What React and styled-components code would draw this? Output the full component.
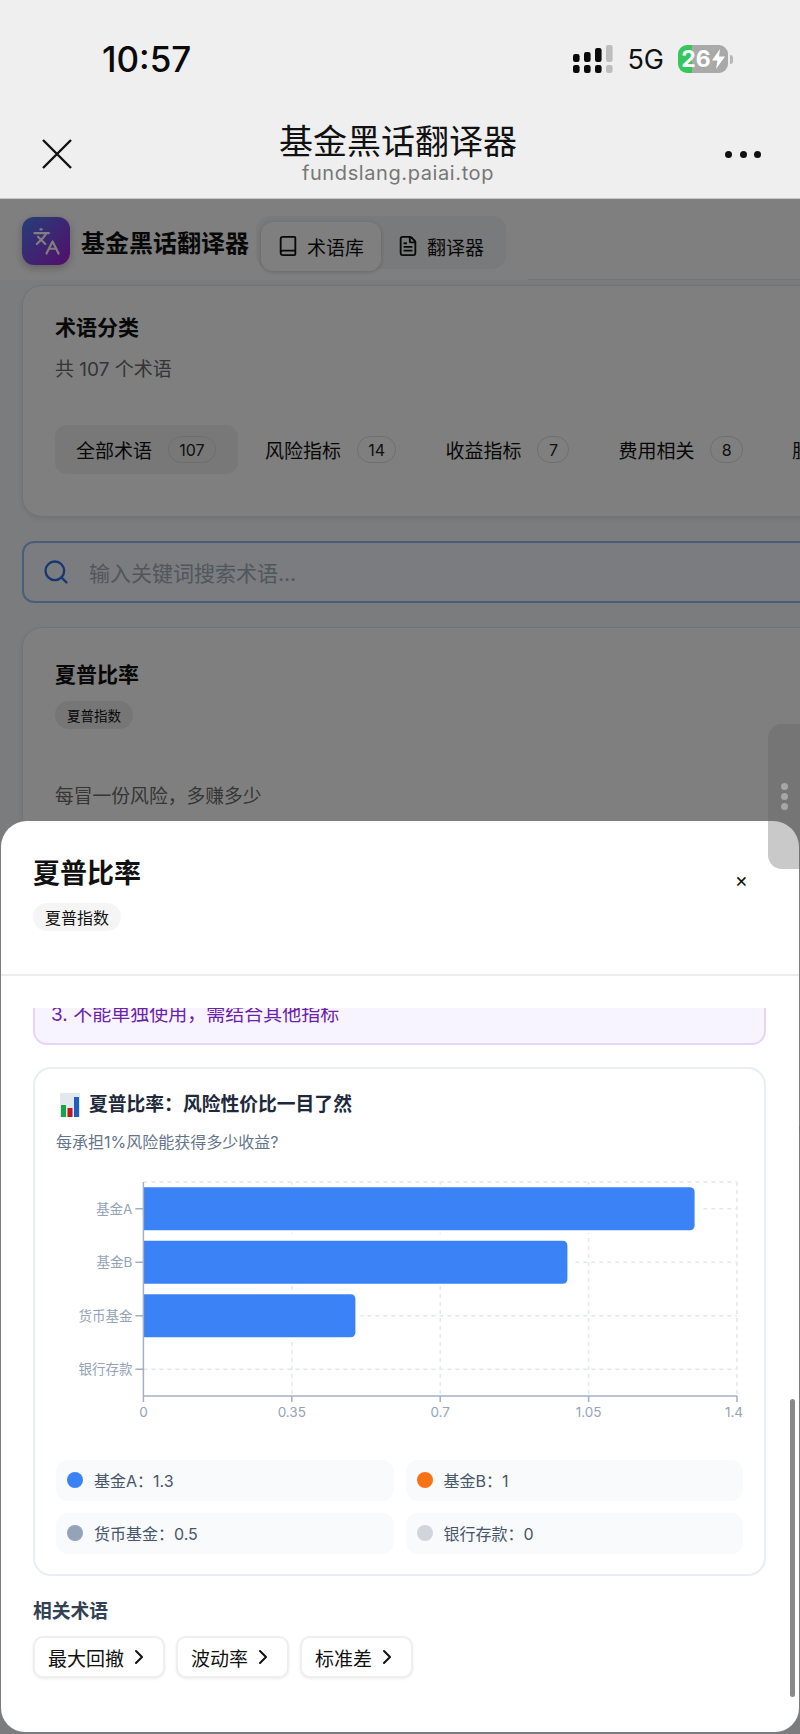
import React from 'react';
import styled, { createGlobalStyle } from 'styled-components';
import { Book, FileText, Languages, Search, ChevronRight } from 'lucide-react';

const GlobalStyle = createGlobalStyle`
  html, body {
    margin: 0;
    padding: 0;
    background: #efefef;
  }
  * {
    box-sizing: border-box;
  }
  body {
    font-family: Inter, "Noto Sans CJK SC", sans-serif;
    color: #111111;
  }
`;

const Screen = styled.div`
  position: relative;
  width: 800px;
  height: 1734px;
  overflow: hidden;
`;

/* webview chrome */
const Chrome = styled.div`
  height: 199px;
  background: #efefef;
  border-bottom: 1px solid #c9c9c9;
`;

const StatusBar = styled.div`
  height: 118px;
  display: flex;
  align-items: center;
  justify-content: space-between;
  padding: 0 67px 0 102px;
`;

const Clock = styled.div`
  font-size: 35px;
  font-weight: 500;
  color: #0a0a0a;
`;

const StatusIcons = styled.div`
  display: flex;
  align-items: center;
`;

const NetLabel = styled.span`
  font-size: 27px;
  font-weight: 400;
  margin: 0 14px;
  color: #111111;
`;

const Battery = styled.div`
  width: 50px;
  height: 28px;
  border-radius: 9px;
  background: linear-gradient(90deg, #34c759 14px, #a9a9a9 14px);
  display: flex;
  align-items: center;
  justify-content: center;
  gap: 1px;
  color: #ffffff;
  font-size: 23px;
  font-weight: 700;
`;

const BatteryNub = styled.span`
  width: 3px;
  height: 9px;
  margin-left: 2px;
  border-radius: 0 3px 3px 0;
  background: #b5b5b5;
`;

const NavRow = styled.div`
  height: 72px;
  display: grid;
  grid-template-columns: 236px 240px 1fr;
  align-items: center;
  padding: 0 39px 0 42px;
`;

const NavTitleBlock = styled.div`
  text-align: center;
`;

const NavTitle = styled.div`
  font-size: 34px;
  line-height: 38px;
  white-space: nowrap;
  color: #111111;
`;

const NavHost = styled.div`
  font-size: 20px;
  line-height: 24px;
  letter-spacing: 0.6px;
  color: #777777;
  white-space: nowrap;
`;

const MoreDots = styled.div`
  justify-self: end;
  display: flex;
  gap: 7.5px;
`;

const MoreDot = styled.span`
  width: 7px;
  height: 7px;
  border-radius: 50%;
  background: #111111;
`;

/* page behind the sheet */
const PageArea = styled.div`
  position: relative;
  height: 1535px;
  background: #f6f8fb;
`;

const Dim = styled.div`
  position: absolute;
  inset: 0;
  background: rgba(0, 0, 0, 0.5);
`;

const PageHeader = styled.div`
  height: 81px;
  display: flex;
  align-items: center;
  padding: 3px 0 0 22px;
  background: linear-gradient(#e6e6e6, #e6e6e6) right bottom / 272px 1px no-repeat, #ffffff;
`;

const LogoBox = styled.div`
  width: 48px;
  height: 48px;
  border-radius: 12px;
  background: linear-gradient(135deg, #4a7ff0, #a81bd8);
  display: flex;
  align-items: center;
  justify-content: center;
  color: #ffffff;
  box-shadow: 0 3px 8px rgba(0, 0, 0, 0.25);
`;

const AppTitle = styled.div`
  font-size: 24px;
  font-weight: 600;
  margin-left: 11px;
  white-space: nowrap;
`;

const Tabs = styled.div`
  display: flex;
  align-items: flex-start;
  width: 250px;
  height: 53px;
  margin: 2px 0 0 7px;
  padding: 6px 0 0 5px;
  border-radius: 14px;
  background: #f3f4f6;
`;

const Tab = styled.div`
  height: 49px;
  width: 120px;
  flex: none;
  display: flex;
  align-items: center;
  gap: 8px;
  padding-left: 16px;
  font-size: 19px;
  border-radius: 12px;
  white-space: nowrap;
  background: ${(p) => (p.$active ? '#ffffff' : 'transparent')};
  box-shadow: ${(p) => (p.$active ? '0 1px 4px rgba(0,0,0,0.2)' : 'none')};
`;

const Content = styled.div`
  width: 1100px;
  padding: 5px 0 0 22px;
`;

const Card = styled.div`
  background: #ffffff;
  border: 1px solid #e6e6e6;
  border-radius: 20px;
  box-shadow: 0 2px 5px rgba(0, 0, 0, 0.08);
  padding: ${(p) => p.$pad || '27px 32px 42px'};
`;

const CardTitle = styled.div`
  font-size: 21px;
  line-height: 30px;
  font-weight: 600;
`;

const CardNote = styled.div`
  font-size: 19px;
  line-height: 26px;
  margin-top: 14px;
  color: #6b6b6b;
`;

const ChipRow = styled.div`
  display: flex;
  gap: 6px;
  margin-top: 42px;
`;

const Chip = styled.div`
  height: 49px;
  display: flex;
  align-items: center;
  gap: 16px;
  padding: 0 22px 0 21px;
  border-radius: 12px;
  font-size: 19px;
  white-space: nowrap;
  background: ${(p) => (p.$active ? '#f1f1f1' : 'transparent')};
`;

const ChipCount = styled.span`
  height: 27px;
  min-width: 32px;
  padding: 0 10.3px;
  display: flex;
  align-items: center;
  justify-content: center;
  border: 1px solid #dddddd;
  border-radius: 14px;
  font-size: 16px;
  color: #222222;
`;

const SearchBar = styled.div`
  height: 62px;
  margin-top: 24px;
  display: flex;
  align-items: center;
  gap: 19px;
  padding-left: 18px;
  border: 2px solid #93bdf5;
  border-radius: 12px;
  background: #f5f8fe;
  color: #2f6fe0;
`;

const Placeholder = styled.span`
  font-size: 21px;
  color: #a3acba;
`;

const TermTag = styled.div`
  display: inline-flex;
  align-items: center;
  height: 28px;
  margin-top: 11px;
  padding: 0 12px;
  border-radius: 14px;
  font-size: 13.5px;
  background: #ececec;
`;

const TermPlain = styled.div`
  font-size: 18.8px;
  line-height: 26px;
  margin-top: 55px;
  color: #6b6b6b;
`;

const TermCard = styled(Card)`
  margin-top: 24px;
  height: 500px;
`;

/* side handle of the webview */
const SideHandle = styled.div`
  position: absolute;
  z-index: 3;
  left: 768px;
  top: 724px;
  width: 32px;
  height: 145px;
  border-radius: 14px 0 0 14px;
  background: rgba(100, 100, 100, 0.35);
  display: flex;
  flex-direction: column;
  align-items: center;
  justify-content: center;
  gap: 3px;
`;

const HandleDot = styled.span`
  width: 7px;
  height: 7px;
  border-radius: 50%;
  background: #a6a6a6;
`;

/* detail sheet */
const Sheet = styled.div`
  position: absolute;
  z-index: 2;
  left: 1px;
  right: 1px;
  top: 821px;
  bottom: 2px;
  display: flex;
  flex-direction: column;
  background: #ffffff;
  border-radius: 26px 26px 24px 24px;
  overflow: hidden;
`;

const SheetHeader = styled.div`
  height: 155px;
  flex: none;
  display: flex;
  justify-content: space-between;
  padding: 35px 51px 0 32px;
  border-bottom: 2px solid #ececec;
`;

const SheetTitle = styled.div`
  font-size: 27px;
  line-height: 36px;
  font-weight: 700;
`;

const SheetTag = styled.div`
  display: inline-flex;
  align-items: center;
  height: 28px;
  margin-top: 11px;
  padding: 0 12px;
  border-radius: 14px;
  font-size: 16px;
  background: #f5f5f5;
`;

const CloseGlyph = styled.span`
  margin-top: 6px;
  font-size: 20px;
  line-height: 36px;
  color: #111111;
`;

const SheetBody = styled.div`
  flex: 1;
  margin-top: 32px;
  overflow: hidden;
  padding: 0 33px 0 32px;
`;

const ScrollInner = styled.div`
  margin-top: -20px;
`;

const Callout = styled.div`
  padding: 12px 16px 15px;
  background: #f8f4ff;
  border: 2px solid #e6d5fb;
  border-radius: 14px;
  color: #6b21a8;
  font-size: 19px;
  line-height: 26px;
`;

const ChartCard = styled.div`
  margin-top: 22px;
  height: 509px;
  padding: 22px 21px 20px 21px;
  border: 2px solid #e8eef5;
  border-radius: 18px;
  background: #ffffff;
`;

const ChartTitle = styled.div`
  display: flex;
  align-items: center;
  gap: 9px;
  margin-left: 4px;
  font-size: 18.8px;
  line-height: 28px;
  font-weight: 600;
  color: #1e293b;
`;

const ChartNote = styled.div`
  margin-top: 11px;
  font-size: 16px;
  line-height: 24px;
  color: #64748b;
`;

const ChartSvg = styled.svg`
  display: block;
  margin-top: 16px;
`;

const Legend = styled.div`
  margin-top: 40px;
  display: grid;
  grid-template-columns: 1fr 1fr;
  gap: 12px;
`;

const LegendItem = styled.div`
  height: 41px;
  display: flex;
  align-items: center;
  gap: 11px;
  padding: 0 0 2px 11px;
  border-radius: 12px;
  background: #f8fafc;
  font-size: 16px;
  color: #475569;
`;

const LegendDot = styled.span`
  width: 16px;
  height: 16px;
  border-radius: 50%;
  background: ${(p) => p.$color};
`;

const RelatedTitle = styled.div`
  margin-top: 22px;
  font-size: 18.8px;
  line-height: 28px;
  font-weight: 600;
  color: #334155;
`;

const RelatedRow = styled.div`
  display: flex;
  gap: 11px;
  margin-top: 10px;
`;

const RelatedButton = styled.div`
  height: 42px;
  display: flex;
  align-items: center;
  gap: 3px;
  padding: 0 12px 0 13px;
  border: 2px solid #efefef;
  border-radius: 10px;
  background: #ffffff;
  box-shadow: 0 1px 3px rgba(0, 0, 0, 0.08);
  font-size: 19px;
  color: #111111;
`;

const ScrollThumb = styled.div`
  position: absolute;
  right: 4px;
  top: 578px;
  width: 5px;
  height: 298px;
  border-radius: 3px;
  background: #8a8a8a;
`;

const categories = [
  { name: '全部术语', count: 107, active: true },
  { name: '风险指标', count: 14 },
  { name: '收益指标', count: 7 },
  { name: '费用相关', count: 8 },
  { name: '股票相关', count: 9 },
];

const chartData = [
  { name: '基金A', value: 1.3, color: '#3b82f6' },
  { name: '基金B', value: 1, color: '#f97316' },
  { name: '货币基金', value: 0.5, color: '#94a3b8' },
  { name: '银行存款', value: 0, color: '#d1d5db' },
];

const related = ['最大回撤', '波动率', '标准差'];

const xTicks = [0, 0.35, 0.7, 1.05, 1.4];

function SignalIcon() {
  const cols = [
    { x: 0, y: 9, h: 8, fill: '#0a0a0a' },
    { x: 11, y: 7, h: 10, fill: '#0a0a0a' },
    { x: 22, y: 3, h: 14, fill: '#0a0a0a' },
    { x: 33, y: 0, h: 17, fill: '#bdbdbd' },
  ];
  return (
    <svg width="40" height="28" viewBox="0 0 40 28">
      {cols.map((c) => (
        <g key={c.x} fill={c.fill}>
          <rect x={c.x} y={c.y} width="6.6" height={c.h} rx="2.2" />
          <rect x={c.x} y="20" width="6.6" height="8" rx="2.2" />
        </g>
      ))}
    </svg>
  );
}

function BarChart() {
  const left = 87.4;
  const right = 681;
  const top = 12;
  const bottom = 226;
  const rowH = (bottom - top) / chartData.length;
  const sx = (v) => left + (v / 1.4) * (right - left);
  const rowY = (i) => top + rowH * (i + 0.5);
  const gridProps = { stroke: '#e2e8f0', strokeWidth: 1.5, strokeDasharray: '4 4' };
  const labelStyle = { fontSize: 13.5, fill: '#94a3b8' };

  return (
    <ChartSvg width="690" height="250" viewBox="0 0 690 250">
      {xTicks.slice(1).map((t) => (
        <line key={t} x1={sx(t)} x2={sx(t)} y1={top} y2={bottom} {...gridProps} />
      ))}
      <line x1={left} x2={right} y1={top} y2={top} {...gridProps} />
      {chartData.map((d, i) => (
        <line key={d.name} x1={left} x2={right} y1={rowY(i)} y2={rowY(i)} {...gridProps} />
      ))}
      {chartData.map((d, i) =>
        d.value > 0 ? (
          <g key={d.name}>
            <rect x={left} y={rowY(i) - 24} width={sx(d.value) - left + 5} height="48" fill="#ffffff" />
            <path
              d={`M${left} ${rowY(i) - 21.5} H${sx(d.value) - 5} q5 0 5 5 V${rowY(i) + 16.5} q0 5 -5 5 H${left} Z`}
              fill="#3b82f6"
            />
          </g>
        ) : null
      )}
      <line x1={left} x2={left} y1={top} y2={bottom} stroke="#a3afc2" strokeWidth="1.5" />
      <line x1={left} x2={right} y1={bottom} y2={bottom} stroke="#a3afc2" strokeWidth="1.5" />
      {chartData.map((d, i) => (
        <g key={d.name}>
          <line x1={left - 8} x2={left} y1={rowY(i)} y2={rowY(i)} stroke="#a3afc2" strokeWidth="1.5" />
          <text x={left - 11} y={rowY(i) + 1.5} textAnchor="end" dominantBaseline="middle" style={labelStyle}>
            {d.name}
          </text>
        </g>
      ))}
      {xTicks.map((t, i) => (
        <g key={t}>
          <line x1={sx(t)} x2={sx(t)} y1={bottom} y2={bottom + 6} stroke="#a3afc2" strokeWidth="1.5" />
          <text
            x={i === xTicks.length - 1 ? sx(t) - 3 : sx(t)}
            y={bottom + 17}
            textAnchor="middle"
            dominantBaseline="middle"
            style={labelStyle}
          >
            {t}
          </text>
        </g>
      ))}
    </ChartSvg>
  );
}

export default function App() {
  return (
    <Screen>
      <GlobalStyle />
      <Chrome>
        <StatusBar>
          <Clock>10:57</Clock>
          <StatusIcons>
            <SignalIcon />
            <NetLabel>5G</NetLabel>
            <Battery>
              26
              <svg width="13" height="20" viewBox="0 0 13 20">
                <path d="M8 0 L0 11.5 H5.5 L4 20 L13 7.5 H7 Z" fill="#ffffff" />
              </svg>
            </Battery>
            <BatteryNub />
          </StatusIcons>
        </StatusBar>
        <NavRow>
          <svg width="30" height="30" viewBox="0 0 30 30">
            <path d="M1 1 L29 29 M29 1 L1 29" stroke="#111111" strokeWidth="2.4" fill="none" />
          </svg>
          <NavTitleBlock>
            <NavTitle>基金黑话翻译器</NavTitle>
            <NavHost>fundslang.paiai.top</NavHost>
          </NavTitleBlock>
          <MoreDots>
            <MoreDot />
            <MoreDot />
            <MoreDot />
          </MoreDots>
        </NavRow>
      </Chrome>

      <PageArea>
        <PageHeader>
          <LogoBox>
            <Languages size={29} strokeWidth={1.8} />
          </LogoBox>
          <AppTitle>基金黑话翻译器</AppTitle>
          <Tabs>
            <Tab $active>
              <Book size={22} strokeWidth={2} />
              术语库
            </Tab>
            <Tab>
              <FileText size={22} strokeWidth={2} />
              翻译器
            </Tab>
          </Tabs>
        </PageHeader>
        <Content>
          <Card>
            <CardTitle>术语分类</CardTitle>
            <CardNote>共 107 个术语</CardNote>
            <ChipRow>
              {categories.map((c) => (
                <Chip key={c.name} $active={c.active}>
                  {c.name}
                  <ChipCount>{c.count}</ChipCount>
                </Chip>
              ))}
            </ChipRow>
          </Card>
          <SearchBar>
            <Search size={28} strokeWidth={2} />
            <Placeholder>输入关键词搜索术语...</Placeholder>
          </SearchBar>
          <TermCard $pad="32px 32px">
            <CardTitle>夏普比率</CardTitle>
            <TermTag>夏普指数</TermTag>
            <TermPlain>每冒一份风险，多赚多少</TermPlain>
          </TermCard>
        </Content>
        <Dim />
      </PageArea>

      <SideHandle>
        <HandleDot />
        <HandleDot />
        <HandleDot />
      </SideHandle>

      <Sheet>
        <SheetHeader>
          <div>
            <SheetTitle>夏普比率</SheetTitle>
            <SheetTag>夏普指数</SheetTag>
          </div>
          <CloseGlyph>×</CloseGlyph>
        </SheetHeader>
        <SheetBody>
          <ScrollInner>
            <Callout>3. 不能单独使用，需结合其他指标</Callout>
            <ChartCard>
              <ChartTitle>
                <svg width="20" height="24" viewBox="0 0 20 24">
                  <rect width="20" height="24" fill="#e3e8ee" />
                  <rect x="1" y="12" width="5" height="12" fill="#16a34a" />
                  <rect x="7.5" y="15" width="5" height="9" fill="#b91c1c" />
                  <rect x="14" y="4" width="5" height="20" fill="#1d5fc4" />
                </svg>
                夏普比率：风险性价比一目了然
              </ChartTitle>
              <ChartNote>每承担1%风险能获得多少收益?</ChartNote>
              <BarChart />
              <Legend>
                {chartData.map((d) => (
                  <LegendItem key={d.name}>
                    <LegendDot $color={d.color} />
                    {d.name}：{d.value}
                  </LegendItem>
                ))}
              </Legend>
            </ChartCard>
            <RelatedTitle>相关术语</RelatedTitle>
            <RelatedRow>
              {related.map((name) => (
                <RelatedButton key={name}>
                  {name}
                  <ChevronRight size={24} strokeWidth={2} />
                </RelatedButton>
              ))}
            </RelatedRow>
          </ScrollInner>
        </SheetBody>
        <ScrollThumb />
      </Sheet>
    </Screen>
  );
}
